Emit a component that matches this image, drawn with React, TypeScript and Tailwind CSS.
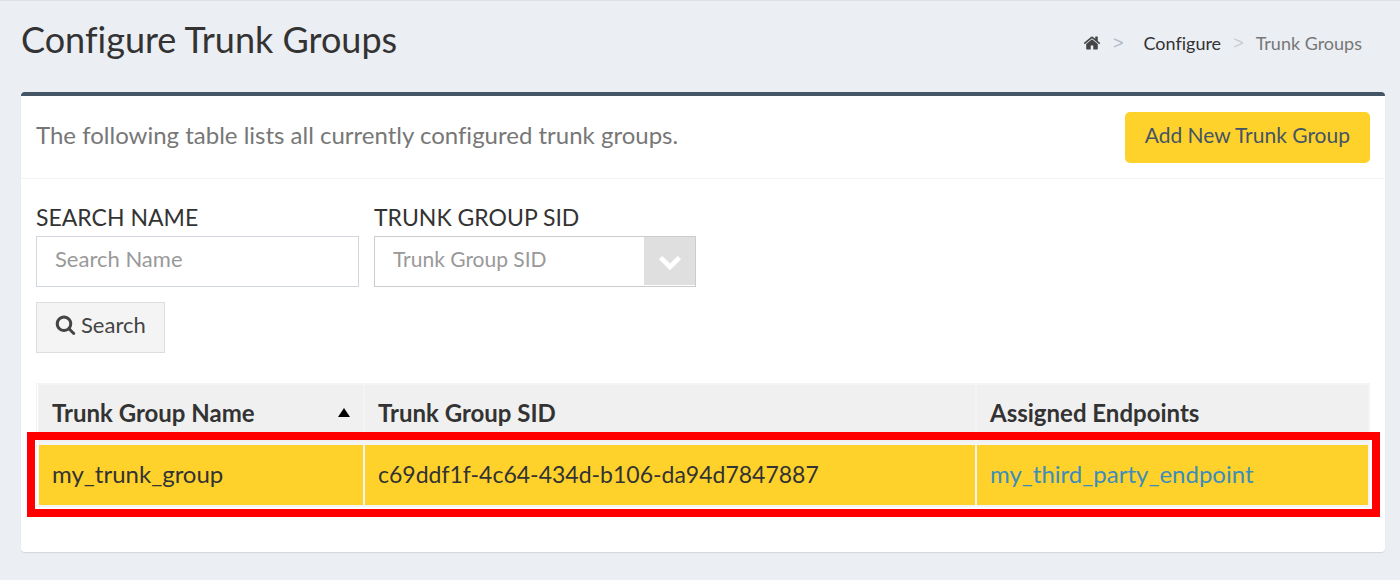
import React from "react";

type IconProps = { path: string; className: string };

const HOME =
  "M1472 992v480q0 26-19 45t-45 19h-384v-384h-256v384h-384q-26 0-45-19t-19-45v-480q0-1 .5-3t.5-3l575-474 575 474q1 2 1 6zm223-69l-62 74q-8 9-21 11h-3q-13 0-21-7l-692-577-692 577q-12 8-24 7-13-2-21-11l-62-74q-8-10-7-23.5t11-21.5l719-599q32-26 76-26t76 26l244 204v-195q0-14 9-23t23-9h192q14 0 23 9t9 23v408l219 182q10 8 11 21.5t-7 23.5z";
const SEARCH =
  "M1216 832q0-185-131.5-316.5t-316.5-131.5-316.5 131.5-131.5 316.5 131.5 316.5 316.5 131.5 316.5-131.5 131.5-316.5zm512 832q0 52-38 90t-90 38q-54 0-90-38l-343-342q-179 124-399 124-143 0-273.5-55.5t-225-150-150-225-55.5-273.5 55.5-273.5 150-225 225-150 273.5-55.5 273.5 55.5 225 150 150 225 55.5 273.5q0 220-124 399l343 343q37 37 37 90z";
const CHEVRON =
  "M1683 808l-742 741q-19 19-45 19t-45-19l-742-741q-19-19-19-45.5t19-45.5l166-165q19-19 45-19t45 19l531 531 531-531q19-19 45-19t45 19l166 165q19 19 19 45.5t-19 45.5z";

function Icon({ path, className }: IconProps) {
  return (
    <svg viewBox="0 0 1792 1792" fill="currentColor" aria-hidden="true" className={className}>
      <path d={path} />
    </svg>
  );
}

const groups = [
  {
    name: "my_trunk_group",
    sid: "c69ddf1f-4c64-434d-b106-da94d7847887",
    endpoint: "my_third_party_endpoint",
  },
];

export default function App() {
  return (
    <div className="min-h-screen border-t border-[#dfe1e6] bg-[#ebeef3] pr-[15px] pb-7 pl-[21px] font-['Lato',sans-serif] text-[#333] [font-variant-ligatures:none]">
      <header className="flex h-[91px] items-start justify-between pr-[23px]">
        <h1 className="pt-4 text-[36px] leading-[44px]">Configure Trunk Groups</h1>
        <nav aria-label="Breadcrumb" className="pt-[30px] text-[18px] leading-6">
          <ol className="flex items-center">
            <li>
              <a href="#home" aria-label="Home" className="block text-[#444]">
                <Icon path={HOME} className="size-[18px]" />
              </a>
            </li>
            <li aria-hidden="true" className="pl-3 font-['Liberation_Sans',sans-serif] text-[#b0b8c6]">&gt;</li>
            <li className="pl-5">
              <a href="#configure">Configure</a>
            </li>
            <li aria-hidden="true" className="px-3 font-['Liberation_Sans',sans-serif] text-[#ccc]">&gt;</li>
            <li className="text-[#777]">Trunk Groups</li>
          </ol>
        </nav>
      </header>

      <main className="rounded border-t-4 border-[#445565] bg-white pb-[45px] shadow-[0_1px_1px_rgba(0,0,0,0.1)]">
        <div className="flex items-start justify-between border-b border-[#f4f4f4] px-[15px] pt-4 pb-[15px]">
          <p className="pt-[7px] text-[24px] leading-8 text-[#777]">
            The following table lists all currently configured trunk groups.
          </p>
          <button
            type="button"
            className="h-[51px] rounded-[5px] bg-[#ffd22b] px-5 pb-[6px] text-[21px] text-[#445565]"
          >
            Add New Trunk Group
          </button>
        </div>

        <form className="px-[15px] pt-[22px]" onSubmit={(e) => e.preventDefault()}>
          <div className="flex gap-[15px]">
            <div className="w-[323px]">
              <label htmlFor="search-name" className="block pb-[2px] text-[23px] leading-[33px]">
                SEARCH NAME
              </label>
              <input
                id="search-name"
                type="text"
                placeholder="Search Name"
                className="block h-[51px] w-full border border-[#d2d6de] px-[18px] pb-[6px] text-[22px] placeholder:text-[#999]"
              />
            </div>
            <div className="w-[322px]">
              <label htmlFor="group-sid" className="block pb-[2px] text-[23px] leading-[33px]">
                TRUNK GROUP SID
              </label>
              <div className="relative">
                <select
                  id="group-sid"
                  className="block h-[51px] w-full appearance-none border border-[#ccc] bg-white px-[18px] pb-[6px] text-[21px] text-[#999]"
                >
                  <option>Trunk Group SID</option>
                </select>
                <span className="pointer-events-none absolute top-px right-px bottom-[2px] flex w-[51px] items-center justify-center bg-[#dfdfdf] text-white">
                  <Icon path={CHEVRON} className="size-6" />
                </span>
              </div>
            </div>
          </div>
          <button
            type="submit"
            className="mt-[15px] flex h-[51px] items-center gap-[5px] border border-[#ddd] bg-[#f4f4f4] px-[18px] pb-[6px] text-[22px] text-[#444]"
          >
            <Icon path={SEARCH} className="size-[21px]" />
            Search
          </button>
        </form>

        <div className="relative mx-[15px] mt-[30px]">
          <table className="w-full table-fixed border-separate border-spacing-0 border border-[#f4f4f4] pl-px text-left text-[24px] leading-8">
            <colgroup>
              <col className="w-[326px]" />
              <col className="w-[612px]" />
              <col />
            </colgroup>
            <thead>
              <tr>
                <th scope="col" className="h-[60px] border border-b-2 border-[#f4f4f4] bg-[#f0f0f0] px-[13px] pb-[2px] font-bold">
                  <span className="flex items-center justify-between">
                    Trunk Group Name
                    <svg viewBox="0 0 12 9" aria-hidden="true" className="h-[9px] w-3">
                      <path d="M6 0 12 9H0Z" />
                    </svg>
                  </span>
                </th>
                <th scope="col" className="border border-b-2 border-[#f4f4f4] bg-[#f0f0f0] px-[13px] pb-[2px] font-bold">
                  Trunk Group SID
                </th>
                <th scope="col" className="border border-b-2 border-[#f4f4f4] bg-[#f0f0f0] px-[13px] pb-[2px] font-bold">
                  Assigned Endpoints
                </th>
              </tr>
            </thead>
            <tbody>
              {groups.map((g) => (
                <tr key={g.sid}>
                  <td className="h-[62px] border border-[#f4f4f4] bg-[#ffd22b] px-[13px] pb-[3px]">{g.name}</td>
                  <td className="border border-[#f4f4f4] bg-[#ffd22b] px-[13px] pb-[3px] text-[23px]">{g.sid}</td>
                  <td className="border border-[#f4f4f4] bg-[#ffd22b] px-[13px] pb-[3px]">
                    <a href="#endpoint" className="text-[#3c8dbc]">{g.endpoint}</a>
                  </td>
                </tr>
              ))}
            </tbody>
          </table>
          <div className="pointer-events-none absolute -right-[10px] -bottom-[10px] -left-[9px] h-[85px] border-8 border-[#ff0000]" />
        </div>
      </main>
    </div>
  );
}
